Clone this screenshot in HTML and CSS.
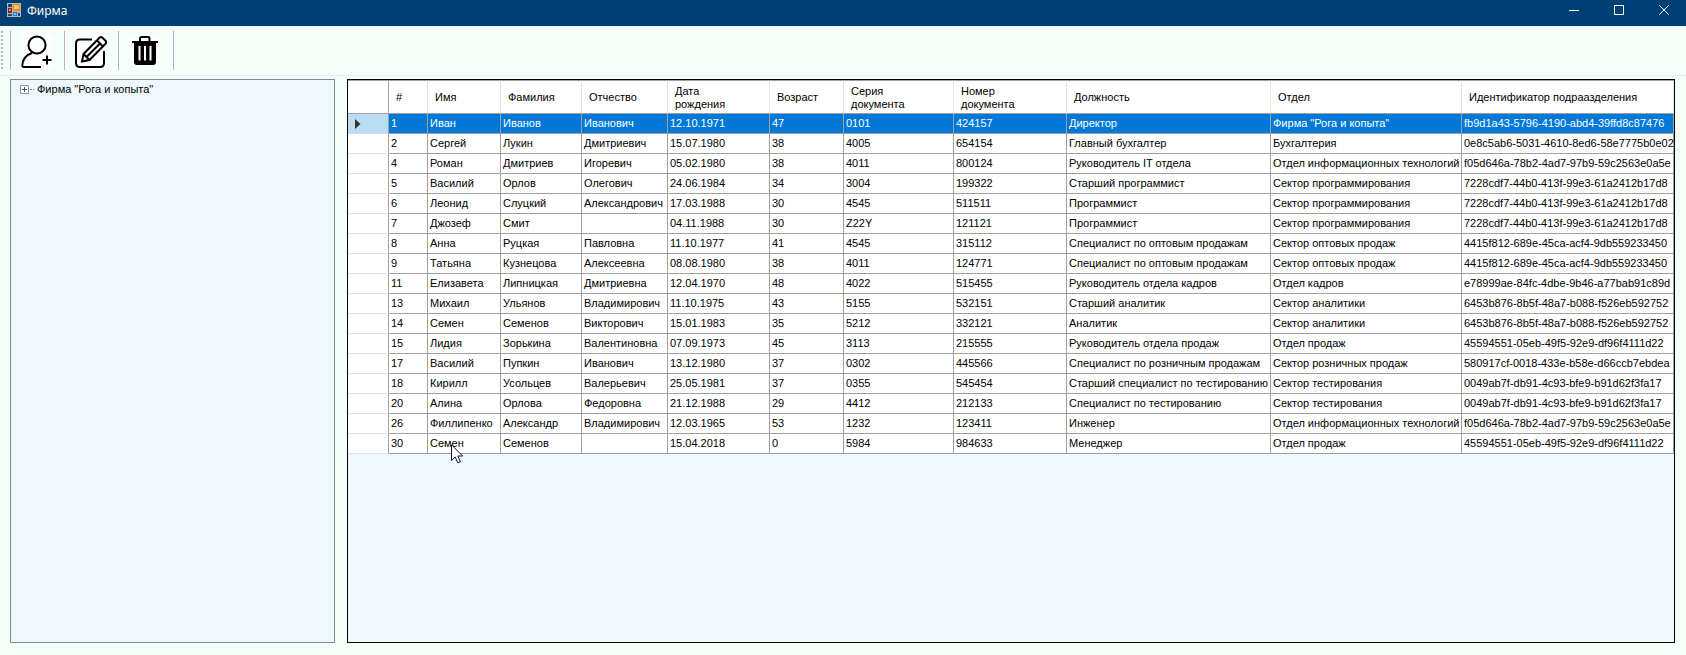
FILE: index.html
```html
<!DOCTYPE html>
<html lang="ru">
<head>
<meta charset="utf-8">
<title>Фирма</title>
<link rel="stylesheet" href="styles.css">
</head>
<body>
<div class="window">
  <header class="titlebar">
    <svg class="app-icon" width="14" height="14" viewBox="0 0 14 14" aria-hidden="true">
      <rect width="14" height="14" fill="#b9b4bd"/>
      <rect x="1" y="1" width="4" height="3" fill="#174b7c"/>
      <rect x="1" y="11" width="4" height="2" fill="#174b7c"/>
      <rect x="11" y="10" width="2" height="3" fill="#174b7c"/>
      <rect x="1" y="5" width="4" height="5" fill="#7c2808"/>
      <rect x="2" y="6" width="2" height="2" fill="#ee8a30"/>
      <rect x="6" y="1" width="7" height="7" fill="#e88a1c"/>
      <rect x="7" y="2" width="5" height="4" fill="#ffc45e"/>
      <rect x="6" y="9" width="4" height="4" fill="#2f79d0"/>
      <rect x="7" y="10" width="2" height="2" fill="#7fc0f5"/>
    </svg>
    <h1 class="title">Фирма</h1>
    <div class="caption-buttons">
      <button class="caption" type="button" aria-label="Свернуть"><svg width="10" height="10" viewBox="0 0 10 10"><path d="M0 5.500h10"/></svg></button>
      <button class="caption" type="button" aria-label="Развернуть"><svg width="10" height="10" viewBox="0 0 10 10"><path d="M.5.5h9v9h-9z"/></svg></button>
      <button class="caption" type="button" aria-label="Закрыть"><svg width="10" height="10" viewBox="0 0 10 10"><path d="M.3.3l9.4 9.4M9.7.3L.3 9.7"/></svg></button>
    </div>
  </header>
  <div class="toolbar" role="toolbar" aria-label="Действия">
    <span class="grip"></span>
    <button class="tool" type="button" aria-label="Добавить сотрудника">
      <svg width="32" height="34" viewBox="0 0 32 34" fill="none" stroke="#000" stroke-width="2">
        <rect width="32" height="34" fill="#fdfefe" stroke="none"/>
        <circle cx="16" cy="10" r="8.6"/>
        <path d="M11 18C5 20 1.600 24.500 1.300 30.500Q1.300 32 3 32H20M26 20.500V29.500M21.500 25H30.500"/>
      </svg>
    </button>
    <button class="tool" type="button" aria-label="Изменить">
      <svg width="32" height="34" viewBox="0 0 32 34" fill="none" stroke="#000" stroke-width="2">
        <rect width="32" height="34" fill="#fdfefe" stroke="none"/>
        <path d="M17 4.500H5Q1 4.500 1 8.500V28Q1 32 5 32H25Q29 32 29 28V16"/>
        <path d="M7 26.500L8.500 19L24.500 2.800Q26 1.300 27.500 2.800L30.500 5.800Q32 7.300 30.500 8.800L14.500 25ZM8.500 19L14.500 25M22 5.500L28 11.500M11.500 22L25.500 8"/>
      </svg>
    </button>
    <button class="tool" type="button" aria-label="Удалить">
      <svg width="32" height="34" viewBox="0 0 32 34" fill="none">
        <rect x="1" width="30" height="32" fill="#fdfefe"/>
        <path d="M3 7H29M11 6.500V3.500Q11 2 12.500 2H19Q20.500 2 20.500 3.500V6.500" stroke="#000" stroke-width="2"/>
        <path d="M5 7.500H27V27Q27 30 24 30H8Q5 30 5 27Z" fill="#000"/>
        <path d="M10.500 11V25.500M16 11V25.500M21.500 11V25.500" stroke="#fff" stroke-width="2"/>
      </svg>
    </button>
  </div>
  <main class="content">
    <nav class="tree" aria-label="Структура фирмы">
      <div class="node">
        <button class="expander" type="button" aria-label="Развернуть узел"><svg width="9" height="9" viewBox="0 0 9 9"><path d="M.5.5h8v8h-8z" fill="#fff" stroke="#919191"/><path d="M2 4.500h5M4.500 2v5" stroke="#344f9f"/></svg></button>
        <span class="branch"></span>
        <span>Фирма "Рога и копыта"</span>
      </div>
    </nav>
    <section class="grid">
      <table class="staff">
        <colgroup>
          <col class="c-mark"><col class="c-id"><col class="c-name"><col class="c-surname"><col class="c-patronymic"><col class="c-birth"><col class="c-age"><col class="c-series"><col class="c-number"><col class="c-post"><col class="c-dept"><col>
        </colgroup>
        <thead>
          <tr><td></td><th scope="col">#</th><th scope="col">Имя</th><th scope="col">Фамилия</th><th scope="col">Отчество</th><th scope="col">Дата<br>рождения</th><th scope="col">Возраст</th><th scope="col">Серия<br>документа</th><th scope="col">Номер<br>документа</th><th scope="col">Должность</th><th scope="col">Отдел</th><th scope="col">Идентификатор подраазделения</th></tr>
        </thead>
        <tbody>
          <tr class="selected"><td class="mark"><svg class="current" width="6" height="10" viewBox="0 0 6 10" aria-hidden="true"><path d="M0 0L5.500 5L0 10Z" fill="#333"/></svg></td><td>1</td><td>Иван</td><td>Иванов</td><td>Иванович</td><td>12.10.1971</td><td>47</td><td>0101</td><td>424157</td><td>Директор</td><td>Фирма "Рога и копыта"</td><td>fb9d1a43-5796-4190-abd4-39ffd8c87476</td></tr>
          <tr><td class="mark"></td><td>2</td><td>Сергей</td><td>Лукин</td><td>Дмитриевич</td><td>15.07.1980</td><td>38</td><td>4005</td><td>654154</td><td>Главный бухгалтер</td><td>Бухгалтерия</td><td>0e8c5ab6-5031-4610-8ed6-58e7775b0e02</td></tr>
          <tr><td class="mark"></td><td>4</td><td>Роман</td><td>Дмитриев</td><td>Игоревич</td><td>05.02.1980</td><td>38</td><td>4011</td><td>800124</td><td>Руководитель IT отдела</td><td>Отдел информационных технологий</td><td>f05d646a-78b2-4ad7-97b9-59c2563e0a5e</td></tr>
          <tr><td class="mark"></td><td>5</td><td>Василий</td><td>Орлов</td><td>Олегович</td><td>24.06.1984</td><td>34</td><td>3004</td><td>199322</td><td>Старший программист</td><td>Сектор программирования</td><td>7228cdf7-44b0-413f-99e3-61a2412b17d8</td></tr>
          <tr><td class="mark"></td><td>6</td><td>Леонид</td><td>Слуцкий</td><td>Александрович</td><td>17.03.1988</td><td>30</td><td>4545</td><td>511511</td><td>Программист</td><td>Сектор программирования</td><td>7228cdf7-44b0-413f-99e3-61a2412b17d8</td></tr>
          <tr><td class="mark"></td><td>7</td><td>Джозеф</td><td>Смит</td><td></td><td>04.11.1988</td><td>30</td><td>Z22Y</td><td>121121</td><td>Программист</td><td>Сектор программирования</td><td>7228cdf7-44b0-413f-99e3-61a2412b17d8</td></tr>
          <tr><td class="mark"></td><td>8</td><td>Анна</td><td>Руцкая</td><td>Павловна</td><td>11.10.1977</td><td>41</td><td>4545</td><td>315112</td><td>Специалист по оптовым продажам</td><td>Сектор оптовых продаж</td><td>4415f812-689e-45ca-acf4-9db559233450</td></tr>
          <tr><td class="mark"></td><td>9</td><td>Татьяна</td><td>Кузнецова</td><td>Алексеевна</td><td>08.08.1980</td><td>38</td><td>4011</td><td>124771</td><td>Специалист по оптовым продажам</td><td>Сектор оптовых продаж</td><td>4415f812-689e-45ca-acf4-9db559233450</td></tr>
          <tr><td class="mark"></td><td>11</td><td>Елизавета</td><td>Липницкая</td><td>Дмитриевна</td><td>12.04.1970</td><td>48</td><td>4022</td><td>515455</td><td>Руководитель отдела кадров</td><td>Отдел кадров</td><td>e78999ae-84fc-4dbe-9b46-a77bab91c89d</td></tr>
          <tr><td class="mark"></td><td>13</td><td>Михаил</td><td>Ульянов</td><td>Владимирович</td><td>11.10.1975</td><td>43</td><td>5155</td><td>532151</td><td>Старший аналитик</td><td>Сектор аналитики</td><td>6453b876-8b5f-48a7-b088-f526eb592752</td></tr>
          <tr><td class="mark"></td><td>14</td><td>Семен</td><td>Семенов</td><td>Викторович</td><td>15.01.1983</td><td>35</td><td>5212</td><td>332121</td><td>Аналитик</td><td>Сектор аналитики</td><td>6453b876-8b5f-48a7-b088-f526eb592752</td></tr>
          <tr><td class="mark"></td><td>15</td><td>Лидия</td><td>Зорькина</td><td>Валентиновна</td><td>07.09.1973</td><td>45</td><td>3113</td><td>215555</td><td>Руководитель отдела продаж</td><td>Отдел продаж</td><td>45594551-05eb-49f5-92e9-df96f4111d22</td></tr>
          <tr><td class="mark"></td><td>17</td><td>Василий</td><td>Пупкин</td><td>Иванович</td><td>13.12.1980</td><td>37</td><td>0302</td><td>445566</td><td>Специалист по розничным продажам</td><td>Сектор розничных продаж</td><td>580917cf-0018-433e-b58e-d66ccb7ebdea</td></tr>
          <tr><td class="mark"></td><td>18</td><td>Кирилл</td><td>Усольцев</td><td>Валерьевич</td><td>25.05.1981</td><td>37</td><td>0355</td><td>545454</td><td>Старший специалист по тестированию</td><td>Сектор тестирования</td><td>0049ab7f-db91-4c93-bfe9-b91d62f3fa17</td></tr>
          <tr><td class="mark"></td><td>20</td><td>Алина</td><td>Орлова</td><td>Федоровна</td><td>21.12.1988</td><td>29</td><td>4412</td><td>212133</td><td>Специалист по тестированию</td><td>Сектор тестирования</td><td>0049ab7f-db91-4c93-bfe9-b91d62f3fa17</td></tr>
          <tr><td class="mark"></td><td>26</td><td>Филлипенко</td><td>Александр</td><td>Владимирович</td><td>12.03.1965</td><td>53</td><td>1232</td><td>123411</td><td>Инженер</td><td>Отдел информационных технологий</td><td>f05d646a-78b2-4ad7-97b9-59c2563e0a5e</td></tr>
          <tr><td class="mark"></td><td>30</td><td class="hovered">Семен<svg class="pointer" width="13" height="20" viewBox="0 0 13 20" aria-hidden="true"><path d="M.5.8V16.500L4.200 13L6.800 18.800L9.300 17.700L6.800 12H11.700Z" fill="#fff" stroke="#111133"/></svg></td><td>Семенов</td><td></td><td>15.04.2018</td><td>0</td><td>5984</td><td>984633</td><td>Менеджер</td><td>Отдел продаж</td><td>45594551-05eb-49f5-92e9-df96f4111d22</td></tr>
        </tbody>
      </table>
    </section>
  </main>
</div>
</body>
</html>
```
FILE: styles.css
```css
* { box-sizing: border-box; }
body {
  margin: 0;
  font-family: "Liberation Sans", Arial, sans-serif;
  font-size: 11px;
  line-height: 13px;
  color: #000;
  background: #f5fffa;
}
button { border: 0; padding: 0; background: transparent; font: inherit; }
svg { display: block; }
.window { display: flex; flex-direction: column; min-height: 100vh; }
.titlebar {
  display: flex;
  flex: none;
  height: 26px;
  padding-left: 7px;
  background: #004074;
  color: #fff;
}
.app-icon { margin-top: 3px; }
.title {
  margin: 0 0 0 6px;
  font-family: "Noto Sans", "Open Sans", sans-serif;
  font-size: 12px;
  font-weight: 400;
  line-height: 22px;
}
.caption-buttons { display: flex; margin-left: auto; }
.caption {
  display: flex;
  justify-content: center;
  width: 45px;
  padding-top: 5px;
}
.caption path { fill: none; stroke: #fff; }
.toolbar {
  display: flex;
  flex: none;
  height: 50px;
  padding: 5px 0 5px 1px;
  border-bottom: 1px solid #ebeeed;
}
.grip {
  width: 2px;
  height: 38px;
  margin-right: 7px;
  background: repeating-linear-gradient(#b8b0bc 0 2px, transparent 2px 4px);
}
.tool {
  width: 54px;
  padding-left: 10px;
  padding-top: 2px;
  border-left: 1px solid #b8b0bc;
}
.tool:last-child { width: 56px; border-right: 1px solid #b8b0bc; }
.content {
  display: grid;
  flex: 1;
  grid-template-columns: 325px 1fr;
  gap: 12px;
  padding: 3px 11px 12px 10px;
}
.tree { border: 1px solid #828790; background: #f0f8ff; padding: 3px 9px; }
.node { display: flex; align-items: center; }
.branch { width: 4px; margin: 0 3px 0 1px; border-top: 1px dotted #808080; }
.grid { border: 1px solid #000; background: #f0f8ff; }
.staff { width: 100%; table-layout: fixed; border-collapse: separate; border-spacing: 0; }
.c-mark { width: 41px; }
.c-id { width: 39px; }
.c-name { width: 73px; }
.c-surname { width: 81px; }
.c-patronymic { width: 86px; }
.c-birth { width: 102px; }
.c-age { width: 74px; }
.c-series { width: 110px; }
.c-number { width: 113px; }
.c-post { width: 204px; }
.c-dept { width: 191px; }
.staff th, .staff td { background: #fff; white-space: nowrap; text-align: left; font-weight: 400; }
.staff thead th, .staff thead td {
  height: 34px;
  padding: 1px 7px 0;
  border-top: 1px solid #a0a0a0;
  border-right: 1px solid #e3e3e3;
  border-bottom: 1px solid #a0a0a0;
}
.staff thead td { border-right-color: #a0a0a0; }
.staff tbody td {
  height: 20px;
  padding: 0 2px;
  border-right: 1px solid #a0a0a0;
  border-bottom: 1px solid #a0a0a0;
}
.staff tbody .mark { border-bottom-color: #e3e3e3; }
.staff .selected td { background: #0078d7; color: #fff; }
.staff .selected .mark { background: #bcdcf4; border-bottom-color: #bcdcf4; }
.current { margin-left: 5px; }
.hovered { position: relative; }
.pointer { position: absolute; left: 23px; top: 10px; z-index: 1; }
```
